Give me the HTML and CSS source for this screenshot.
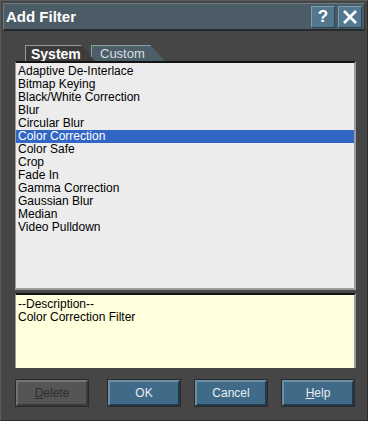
FILE: index.html
```html
<!DOCTYPE html>
<html lang="en">
<head>
    <meta charset="UTF-8">
    <title>Add Filter</title>
    <link rel="stylesheet" href="styles.css">
</head>
<body>
    <div class="window">
        <!-- title bar -->
        <div class="titlebar">
            <span class="title">Add Filter</span>
            <div class="title-btns">
                <div class="tbtn">?</div>
                <div class="tbtn">
                    <svg width="18" height="18" viewBox="0 0 18 18"><path d="M3 3 L15 15 M15 3 L3 15" stroke="#fff" stroke-width="2.6" fill="none"/></svg>
                </div>
            </div>
        </div>

        <div class="body">
            <div class="tabs">
                <div class="tab active">System</div>
                <div class="tab">Custom</div>
            </div>

            <ul class="list">
                <li>Adaptive De-Interlace</li>
                <li>Bitmap Keying</li>
                <li>Black/White Correction</li>
                <li>Blur</li>
                <li>Circular Blur</li>
                <li class="selected">Color Correction</li>
                <li>Color Safe</li>
                <li>Crop</li>
                <li>Fade In</li>
                <li>Gamma Correction</li>
                <li>Gaussian Blur</li>
                <li>Median</li>
                <li>Video Pulldown</li>
            </ul>

            <div class="desc">
                --Description--<br>
                Color Correction Filter
            </div>

            <div class="buttons">
                <div class="btn disabled"><u>D</u>elete</div>
                <div class="btn">OK</div>
                <div class="btn">Cancel</div>
                <div class="btn"><u>H</u>elp</div>
            </div>
        </div>
    </div>
</body>
</html>
```

FILE: styles.css
```css
body {
    margin: 0;
    background: #464646;
    font-family: "Liberation Sans", Arial, sans-serif;
    font-size: 11px;
}
.window {
    width: 368px;
    height: 421px;
    box-sizing: border-box;
    background: #464646;
    border: 1px solid #5a5a5a;
    border-right-color: #2c2c2c;
    border-bottom-color: #2c2c2c;
    padding: 2px;
}
.titlebar {
    height: 28px;
    background: #4c5c66;
    border-top: 1px solid #6c7c86;
    border-left: 1px solid #6c7c86;
    border-bottom: 2px solid #262a2c;
    border-right: 1px solid #30383c;
    display: flex;
    align-items: center;
    justify-content: space-between;
    box-sizing: border-box;
}
.title {
    color: #fff;
    font-weight: bold;
    font-size: 15px;
    padding-left: 2px;
}
.title-btns {
    display: flex;
    gap: 3px;
    padding-right: 2px;
}
.tbtn {
    width: 24px;
    height: 22px;
    box-sizing: border-box;
    background: #52788f;
    border: 1px solid #7d9db0;
    border-right-color: #2f4654;
    border-bottom-color: #2f4654;
    color: #fff;
    font-weight: bold;
    font-size: 17px;
    display: flex;
    align-items: center;
    justify-content: center;
}
.body {
    padding: 14px 10px 0 12px;
}
.tabs {
    display: flex;
    height: 16px;
    padding-left: 10px;
}
.tab {
    width: 74px;
    box-sizing: border-box;
    background: #4c5e68;
    color: #d8dee2;
    font-size: 13px;
    line-height: 16px;
    padding-left: 8px;
    border-top: 1px solid #8c9aa2;
    border-left: 1px solid #8c9aa2;
    clip-path: polygon(0 0, 80% 0, 100% 100%, 0 100%);
    margin-left: -4px;
}
.tab.active {
    width: 70px;
    background: #3c3c3c;
    color: #fff;
    font-weight: bold;
    font-size: 14px;
    margin-left: 0;
    position: relative;
    z-index: 1;
    border-color: #9a9a9a;
    padding-left: 5px;
}
.list {
    list-style: none;
    margin: 0;
    padding: 2px 0 0 0;
    height: 229px;
    box-sizing: border-box;
    background: #ececec;
    border-top: 2px solid #141414;
    border-left: 1px solid #9c9c9c;
    border-right: 2px solid #9c9c9c;
    border-bottom: 2px solid #9c9c9c;
    width: 341px;
}
.list li {
    height: 13px;
    line-height: 13px;
    font-size: 12px;
    padding-left: 2px;
    color: #000;
}
.list li.selected {
    background: #3166c6;
    color: #fff;
}
.desc {
    margin-top: 3px;
    width: 341px;
    height: 75px;
    box-sizing: border-box;
    background: #ffffde;
    border-top: 2px solid #141414;
    border-left: 1px solid #9c9c9c;
    border-right: 2px solid #9c9c9c;
    padding: 3px 2px;
    font-size: 12px;
    line-height: 13px;
    color: #000;
}
.buttons {
    display: flex;
    margin-top: 12px;
    padding-left: 1px;
}
.btn {
    width: 72px;
    height: 26px;
    box-sizing: border-box;
    background: #3f6a88;
    border: 2px solid #6e8ea3;
    border-right-color: #24384a;
    border-bottom-color: #24384a;
    outline: 1px solid #2a2a2a;
    color: #e8eef2;
    font-size: 12px;
    display: flex;
    align-items: center;
    justify-content: center;
}
.btn + .btn {
    margin-left: 15px;
}
.btn.disabled {
    margin-right: 5px;
    background: #555;
    border-color: #747474 #3a3a3a #3a3a3a #747474;
    color: #2e2e2e;
}
```
